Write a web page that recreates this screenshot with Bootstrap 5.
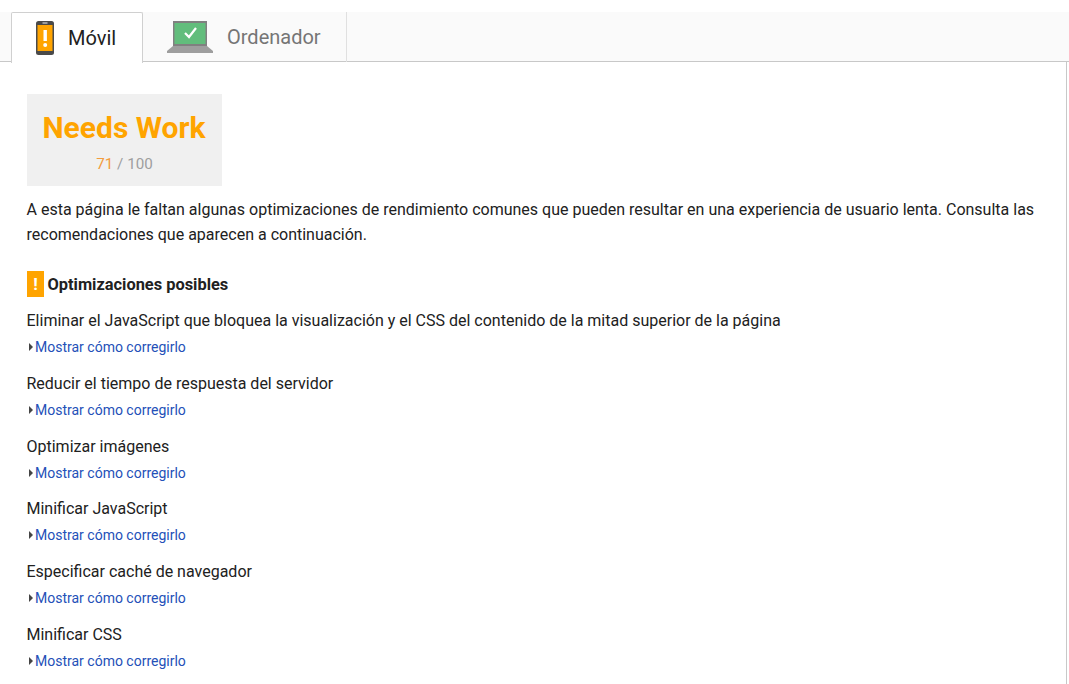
<!doctype html>
<html lang="es"><head><meta charset="utf-8"><title>PageSpeed</title>
<link rel="stylesheet" href="https://cdn.jsdelivr.net/npm/bootstrap@5.3.0/dist/css/bootstrap.min.css">
<style>
html,body{height:684px;overflow:hidden;background:#fff}
body{font-family:Roboto,"Liberation Sans",sans-serif;color:#212121;font-size:16px;line-height:25px;padding-top:12px}
.tabbar{height:50px;background:#fafafa;border-bottom:1px solid #c8c8c8;padding-left:11px}
.tabitem{height:50px;display:flex;align-items:center;font-size:20px;color:#757575;border-right:1px solid #e0e0e0}
.tabitem.on{width:132px;height:51px;background:#fff;color:#212121;border:1px solid #d0d0d0;border-bottom:0;border-radius:2px 2px 0 0;padding-left:24px;gap:13px}
.tabitem.off{width:204px;padding-left:24px;gap:14px}
.sheet{width:1067px;height:622px;border-right:1px solid #c8c8c8;padding:32px 0 0 27px}
.scorebox{width:195px;height:92px;background:#f0f0f0;text-align:center;padding-top:13.5px}
.scorehead{font-size:30px;font-weight:700;color:#ffa400;line-height:40px;padding-right:1px}
.scoreline{font-size:15.2px;color:#9e9e9e;line-height:20px;margin-top:6.5px}
.scoreval{color:#f39c3d}
.intro{width:1020px;margin:11px 0 0 -.5px}
.warnhead{margin-top:24px;height:26px;font-weight:700;font-size:16.4px;gap:3.5px}
.warnsq{width:17px;height:26px;background:#ffa400;color:#fff;font-size:17px;line-height:26px;text-align:center}
.rule{height:62.8px;margin-left:-.5px}
.rulename{line-height:25px;padding-top:11px}
.fixlink{font-size:14px;line-height:20px;color:#2450b8;text-decoration:none;margin-top:4px}
.caret{width:0;height:0;border-left:4.5px solid #444;border-top:4px solid transparent;border-bottom:4px solid transparent;margin:0 2.5px 0 2px}
</style></head><body>
<nav class="tabbar d-flex">
 <div class="tabitem on"><svg width="19" height="34" viewBox="0 0 19 34"><rect x="0" y="0" width="18" height="34" rx="2.5" fill="#4a4a4a"/><rect x="1.5" y="4" width="15" height="26" fill="#ffa400"/><rect x="6.5" y="1.5" width="5" height="1" fill="#eee"/><rect x="7.5" y="9" width="3.4" height="11" fill="#fff"/><circle cx="9.2" cy="24" r="2" fill="#fff"/></svg><span>Móvil</span></div>
 <div class="tabitem off"><svg width="46" height="32" viewBox="0 0 46 32"><rect x="6" y="0" width="34" height="25" fill="#808080"/><rect x="7.5" y="2" width="31" height="21" fill="#62bd7c"/><path d="M18 12l4 4 7-9" fill="none" stroke="#fff" stroke-width="2.2"/><path d="M6 25h34l6 5v2H0v-2z" fill="#9e9e9e"/></svg><span>Ordenador</span></div>
</nav>
<main class="sheet">
 <div class="scorebox"><div class="scorehead">Needs Work</div><div class="scoreline"><span class="scoreval">71</span> / 100</div></div>
 <p class="intro">A esta página le faltan algunas optimizaciones de rendimiento comunes que pueden resultar en una experiencia de usuario lenta. Consulta las recomendaciones que aparecen a continuación.</p>
 <div class="warnhead d-flex align-items-center"><span class="warnsq">!</span><span>Optimizaciones posibles</span></div>
 <div class="rule"><div class="rulename">Eliminar el JavaScript que bloquea la visualización y el CSS del contenido de la mitad superior de la página</div><a href="#" class="fixlink d-flex align-items-center"><i class="caret"></i>Mostrar cómo corregirlo</a></div>
 <div class="rule"><div class="rulename">Reducir el tiempo de respuesta del servidor</div><a href="#" class="fixlink d-flex align-items-center"><i class="caret"></i>Mostrar cómo corregirlo</a></div>
 <div class="rule"><div class="rulename">Optimizar imágenes</div><a href="#" class="fixlink d-flex align-items-center"><i class="caret"></i>Mostrar cómo corregirlo</a></div>
 <div class="rule"><div class="rulename">Minificar JavaScript</div><a href="#" class="fixlink d-flex align-items-center"><i class="caret"></i>Mostrar cómo corregirlo</a></div>
 <div class="rule"><div class="rulename">Especificar caché de navegador</div><a href="#" class="fixlink d-flex align-items-center"><i class="caret"></i>Mostrar cómo corregirlo</a></div>
 <div class="rule"><div class="rulename">Minificar CSS</div><a href="#" class="fixlink d-flex align-items-center"><i class="caret"></i>Mostrar cómo corregirlo</a></div>
</main>
<script src="https://cdn.jsdelivr.net/npm/bootstrap@5.3.0/dist/js/bootstrap.bundle.min.js"></script>
</body></html>
